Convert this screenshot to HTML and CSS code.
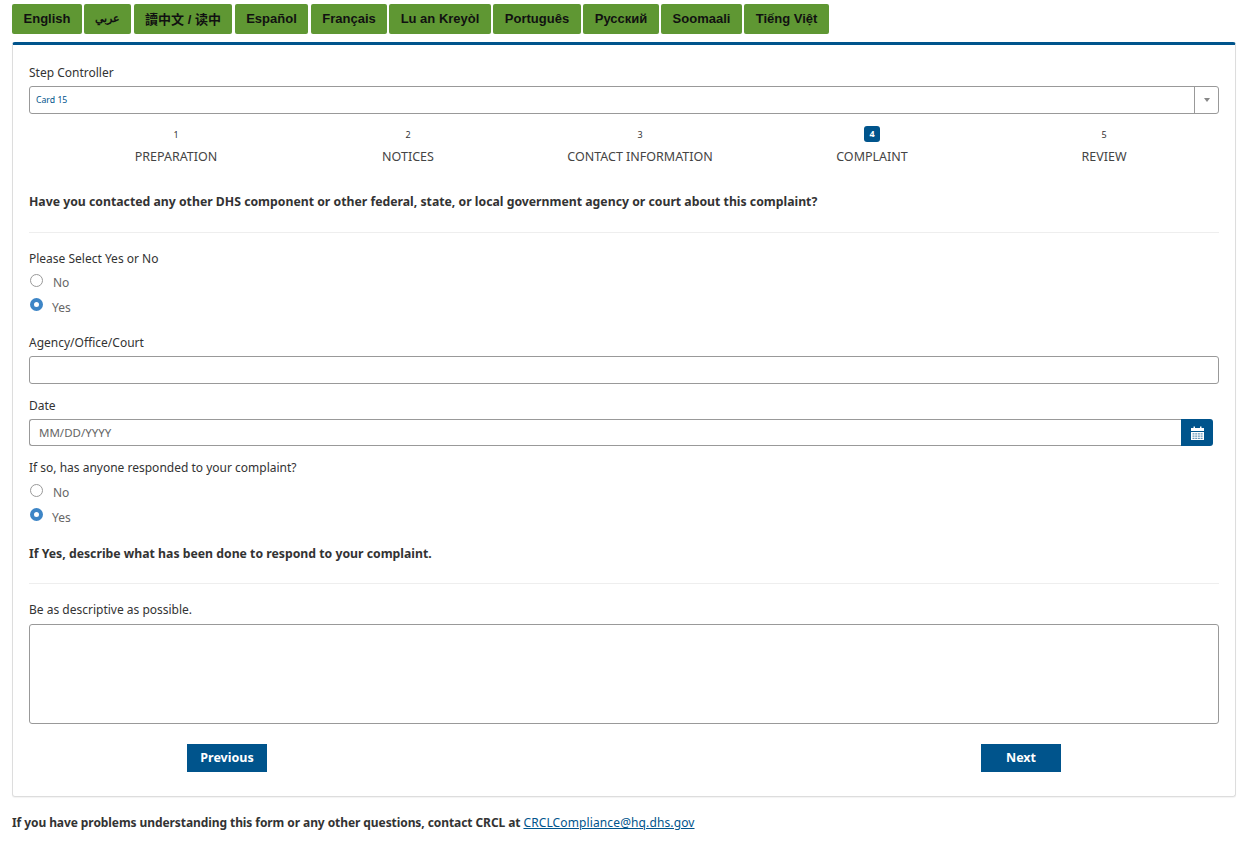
FILE: index.html
```html
<!DOCTYPE html>
<html lang="en">
<head>
<meta charset="utf-8">
<title>Complaint form</title>
<link rel="stylesheet" href="styles.css">
</head>
<body>
<nav class="langs">
  <a class="lang l-en">English</a>
  <a class="lang l-ar">عربي</a>
  <a class="lang l-zh">讀中文 / 读中</a>
  <a class="lang l-es">Español</a>
  <a class="lang l-fr">Français</a>
  <a class="lang l-ht">Lu an Kreyòl</a>
  <a class="lang l-pt">Português</a>
  <a class="lang l-ru">Русский</a>
  <a class="lang l-som">Soomaali</a>
  <a class="lang l-vi">Tiếng Việt</a>
</nav>
<main class="card">
  <div class="label first">Step Controller</div>
  <div class="select">
    <span class="select-value">Card 15</span>
    <span class="select-arrow"><i class="caret"></i></span>
  </div>
  <ol class="steps">
    <li class="step"><span class="num">1</span><span class="name">PREPARATION</span></li>
    <li class="step"><span class="num">2</span><span class="name">NOTICES</span></li>
    <li class="step"><span class="num">3</span><span class="name">CONTACT INFORMATION</span></li>
    <li class="step"><span class="num current">4</span><span class="name">COMPLAINT</span></li>
    <li class="step"><span class="num">5</span><span class="name">REVIEW</span></li>
  </ol>
  <h2 class="question q1">Have you contacted any other DHS component or other federal, state, or local government agency or court about this complaint?</h2>
  <hr class="rule r1">
  <div class="label l-select">Please Select Yes or No</div>
  <div class="radio"><i class="dot"></i><span class="opt">No</span></div>
  <div class="radio"><i class="dot on"></i><span class="opt">Yes</span></div>
  <div class="label l-agency">Agency/Office/Court</div>
  <div class="field"></div>
  <div class="label l-date">Date</div>
  <div class="date">
    <div class="date-input">MM/DD/YYYY</div>
    <button class="cal" type="button" aria-label="Open calendar">
      <svg width="13" height="14" viewBox="0 0 13 14"><path fill="#fff" d="M0 2h2.500V0.500h1.500V2h5V0.500h1.500V2H13v3H0z"/><path fill="#fff" d="M0 6h13v8H0z"/><path fill="#00548c" opacity="0.600" d="M1.500 7.300h2v1.300h-2zM4.200 7.300h2v1.300h-2zM6.900 7.300h2v1.300h-2zM9.600 7.300h2v1.300h-2zM1.500 9.500h2v1.300h-2zM4.200 9.500h2v1.300h-2zM6.900 9.500h2v1.300h-2zM9.600 9.500h2v1.300h-2zM1.500 11.700h2v1.300h-2zM4.200 11.700h2v1.300h-2zM6.900 11.700h2v1.300h-2zM9.600 11.700h2v1.300h-2z"/></svg>
    </button>
  </div>
  <div class="label l-if">If so, has anyone responded to your complaint?</div>
  <div class="radio"><i class="dot"></i><span class="opt">No</span></div>
  <div class="radio"><i class="dot on"></i><span class="opt">Yes</span></div>
  <h2 class="question q2">If Yes, describe what has been done to respond to your complaint.</h2>
  <hr class="rule r2">
  <div class="label l-desc">Be as descriptive as possible.</div>
  <div class="area"></div>
  <div class="actions">
    <button class="btn" type="button">Previous</button>
    <button class="btn" type="button">Next</button>
  </div>
</main>
<p class="foot">If you have problems understanding this form or any other questions, contact CRCL at <a class="mail">CRCLCompliance@hq.dhs.gov</a></p>
</body>
</html>
```
FILE: styles.css
```css
* { box-sizing: border-box; }
body {
  margin: 0;
  background: #fff;
  color: #333;
  font-family: "Noto Sans", "Liberation Sans", sans-serif;
  font-size: 12px;
  height: 846px;
  overflow: hidden;
}
.langs {
  display: flex;
  gap: 2px;
  padding: 4px 0 0 12px;
  height: 42px;
}
.lang {
  display: flex;
  align-items: center;
  justify-content: center;
  height: 30px;
  padding-bottom: 2px;
  background: #5f9733;
  border-radius: 2px;
  color: #111;
  font: bold 13px "Liberation Sans", "Noto Sans CJK TC", sans-serif;
}
.l-en { width: 70px; }
.l-ar { width: 47px; font-size: 11px; margin-right: 1px; }
.l-zh { width: 98px; margin-right: 1px; }
.l-es { width: 73px; margin-right: 1px; }
.l-fr { width: 76px; }
.l-ht { width: 102px; }
.l-pt { width: 88px; }
.l-ru { width: 76px; }
.l-som { width: 81px; }
.l-vi { width: 85px; }
.card {
  width: 1224px;
  height: 755px;
  margin-left: 12px;
  padding: 0 16px;
  border: 1px solid #ddd;
  border-top: 3px solid #00548c;
  border-radius: 3px;
  box-shadow: 0 1px 1px rgba(0,0,0,.05);
}
.label { height: 18px; line-height: 18px; color: #333; }
.first { margin-top: 19px; }
.select {
  display: flex;
  height: 28px;
  margin-top: 4px;
  border: 1px solid #999;
  border-radius: 3px;
}
.select-value {
  flex: 1;
  padding-left: 6px;
  line-height: 26px;
  font-size: 8.700px;
  color: #00548c;
}
.select-arrow {
  display: flex;
  align-items: center;
  justify-content: center;
  width: 24px;
  border-left: 1px solid #999;
}
.caret {
  border: 3px solid transparent;
  border-top: 4px solid #888;
  border-bottom: 0;
}
.steps {
  display: grid;
  grid-template-columns: repeat(5, 232px);
  margin: 12px 0 0;
  padding: 0 0 0 31px;
  list-style: none;
}
.step { display: flex; flex-direction: column; align-items: center; }
.num {
  display: block;
  width: 16px;
  height: 16px;
  line-height: 17px;
  text-align: center;
  font-size: 9px;
  border-radius: 3px;
}
.num.current { background: #00548c; color: #fff; font-weight: bold; line-height: 16px; }
.name { margin-top: 5px; height: 20px; line-height: 20px; color: #444; font-size: 12.500px; }
.question {
  margin: 0;
  font-size: 12.250px;
  font-weight: bold;
  line-height: 20px;
  color: #333;
}
.q1 { margin-top: 25px; }
.q2 { margin-top: 15px; }
.rule { margin: 0; border: 0; border-top: 1px solid #eee; }
.r1 { margin-top: 20px; }
.r2 { margin-top: 19px; }
.l-select { margin-top: 17px; }
.radio { display: flex; align-items: center; height: 24.500px; color: #666; }
.dot {
  width: 13px;
  height: 13px;
  margin: 0 10px 4px 1px;
  border: 1px solid #999;
  border-radius: 50%;
  background: #fff;
}
.dot.on { border: 4px solid #3d85c6; margin-right: 9px; }
.opt { padding-top: 1px; }
.l-agency { margin-top: 15px; }
.field {
  height: 28px;
  margin-top: 4px;
  border: 1px solid #999;
  border-radius: 3px;
}
.l-date { margin-top: 13px; }
.date { display: flex; height: 27px; margin: 4px 6px 0 0; }
.date-input {
  flex: 1;
  padding-left: 9px;
  line-height: 25px;
  font-size: 11.500px;
  color: #666;
  border: 1px solid #999;
  border-right: 0;
  border-radius: 3px 0 0 3px;
}
.cal {
  display: flex;
  align-items: center;
  justify-content: center;
  width: 32px;
  padding: 0;
  border: 0;
  background: #00548c;
  border-radius: 0 3px 3px 0;
}
.l-if { margin-top: 13px; }
.l-if + .radio { margin-top: 3px; }
.l-select + .radio { margin-top: 2px; }
.l-desc { margin-top: 17px; }
.area {
  height: 100px;
  margin-top: 5px;
  border: 1px solid #999;
  border-radius: 3px;
}
.actions {
  display: flex;
  gap: 714px;
  margin-top: 20px;
  padding-left: 158px;
}
.btn {
  width: 80px;
  height: 28px;
  padding: 0 0 2px;
  border: 0;
  background: #00548c;
  color: #fff;
  font: bold 12.500px "Noto Sans", sans-serif;
}
.foot {
  margin: 16px 0 0 12px;
  line-height: 20px;
  font-weight: bold;
  color: #333;
  letter-spacing: -0.08px;
}
.mail { font-weight: normal; color: #00548c; text-decoration: underline; letter-spacing: 0.120px; }
```
